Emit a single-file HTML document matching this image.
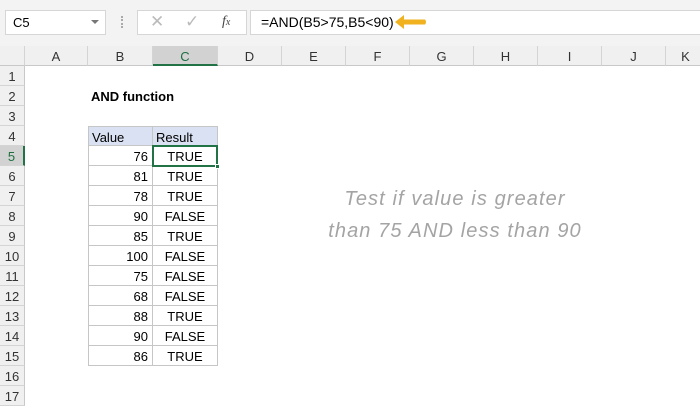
<!DOCTYPE html>
<html><head><style>
*{margin:0;padding:0;box-sizing:border-box}
body{width:700px;height:400px;overflow:hidden;background:#fff;font-family:"Liberation Sans",sans-serif;position:relative}
.top{position:absolute;left:0;top:0;width:700px;height:46px;background:#f3f3f3}
.box{position:absolute;background:#fff;border:1px solid #d6d6d6}
.ch{position:absolute;top:46px;height:20px;background:#f0f0f0;border-right:1px solid #d4d4d4;border-bottom:1px solid #c8c8c8;font-size:13px;color:#333;text-align:center;line-height:21px}
.rh{position:absolute;left:0;width:25px;height:20px;background:#f0f0f0;border-bottom:1px solid #d4d4d4;border-right:1px solid #c8c8c8;font-size:13px;color:#333;text-align:center;line-height:22px}
.c{position:absolute;height:20px;font-size:13px;line-height:22px;color:#000;border-right:1px solid #c6c6c6;border-bottom:1px solid #c6c6c6}
.note{position:absolute;left:280px;width:350px;text-align:center;color:#a4a4a4;font-size:20px;font-style:italic;font-family:"Liberation Sans",sans-serif;letter-spacing:1.1px}
</style></head><body>
<div class="top"></div>
<div class="box" style="left:5px;top:10px;width:101px;height:25px;font-size:13px;line-height:23px;padding-left:7px">C5<span style="position:absolute;right:6px;top:9px;border-left:4px solid transparent;border-right:4px solid transparent;border-top:4px solid #777"></span></div>
<div style="position:absolute;left:121px;top:16px;width:2px;height:12px;border-left:2px dotted #aaa"></div>
<div class="box" style="left:137px;top:10px;width:110px;height:25px"></div>
<div style="position:absolute;left:150px;top:12px;font-size:17px;color:#bbb">✕</div>
<div style="position:absolute;left:185px;top:12px;font-size:17px;color:#bbb">✓</div>
<div style="position:absolute;left:222px;top:14px;font-size:14px;color:#444;font-style:italic;font-family:'Liberation Serif',serif">f<span style="font-size:10px">x</span></div>
<div class="box" style="left:250px;top:10px;width:455px;height:25px;font-size:14px;line-height:23px;padding-left:10px">=AND(B5&gt;75,B5&lt;90)</div>
<svg style="position:absolute;left:392px;top:13px" width="36" height="18"><path d="M3 9 L12 2 L12 6.5 L33 6.5 Q35 9 33 11.5 L12 11.5 L12 16 Z" fill="#f0b21e"/></svg>
<div class="ch" style="left:0;width:25px;background:#f0f0f0"></div>
<div class="ch" style="left:25px;width:63px">A</div>
<div class="ch" style="left:88px;width:65px">B</div>
<div class="ch" style="left:153px;width:65px;background:#d2d2d2;color:#1e6e40;border-bottom:2px solid #217346">C</div>
<div class="ch" style="left:218px;width:64px">D</div>
<div class="ch" style="left:282px;width:64px">E</div>
<div class="ch" style="left:346px;width:64px">F</div>
<div class="ch" style="left:410px;width:64px">G</div>
<div class="ch" style="left:474px;width:64px">H</div>
<div class="ch" style="left:538px;width:64px">I</div>
<div class="ch" style="left:602px;width:64px">J</div>
<div class="ch" style="left:666px;width:40px">K</div>
<div class="rh" style="top:66px">1</div><div class="rh" style="top:86px">2</div><div class="rh" style="top:106px">3</div><div class="rh" style="top:126px">4</div>
<div class="rh" style="top:146px;background:#d2d2d2;color:#1e6e40;border-right:2px solid #217346">5</div>
<div class="rh" style="top:166px">6</div><div class="rh" style="top:186px">7</div><div class="rh" style="top:206px">8</div><div class="rh" style="top:226px">9</div><div class="rh" style="top:246px">10</div><div class="rh" style="top:266px">11</div><div class="rh" style="top:286px">12</div><div class="rh" style="top:306px">13</div><div class="rh" style="top:326px">14</div><div class="rh" style="top:346px">15</div><div class="rh" style="top:366px">16</div><div class="rh" style="top:386px">17</div>
<div style="position:absolute;left:91px;top:87px;font-size:13px;line-height:20px;font-weight:bold">AND function</div>
<div class="c" style="left:88px;top:126px;width:65px;background:#d9e1f2;border-left:1px solid #c6c6c6;border-top:1px solid #c6c6c6;padding-left:3px">Value</div>
<div class="c" style="left:153px;top:126px;width:65px;background:#d9e1f2;border-top:1px solid #c6c6c6;padding-left:3px">Result</div>
<div id="rows"></div>
<script>
var v=[76,81,78,90,85,100,75,68,88,90,86],h='';
v.forEach(function(x,i){var t=146+i*20,r=(x>75&&x<90)?'TRUE':'FALSE';
h+='<div class="c" style="left:88px;top:'+t+'px;width:65px;border-left:1px solid #c6c6c6;text-align:right;padding-right:4px">'+x+'</div>';
h+='<div class="c" style="left:153px;top:'+t+'px;width:65px;text-align:center">'+r+'</div>';});
document.getElementById('rows').innerHTML=h;
</script>
<div style="position:absolute;left:152px;top:145px;width:66px;height:22px;border:2px solid #217346"></div>
<div style="position:absolute;left:215px;top:164px;width:5px;height:5px;background:#217346;border:1px solid #fff"></div>
<div class="note" style="top:188px">Test if value is greater</div>
<div class="note" style="top:220px">than 75 AND less than 90</div>
</body></html>
